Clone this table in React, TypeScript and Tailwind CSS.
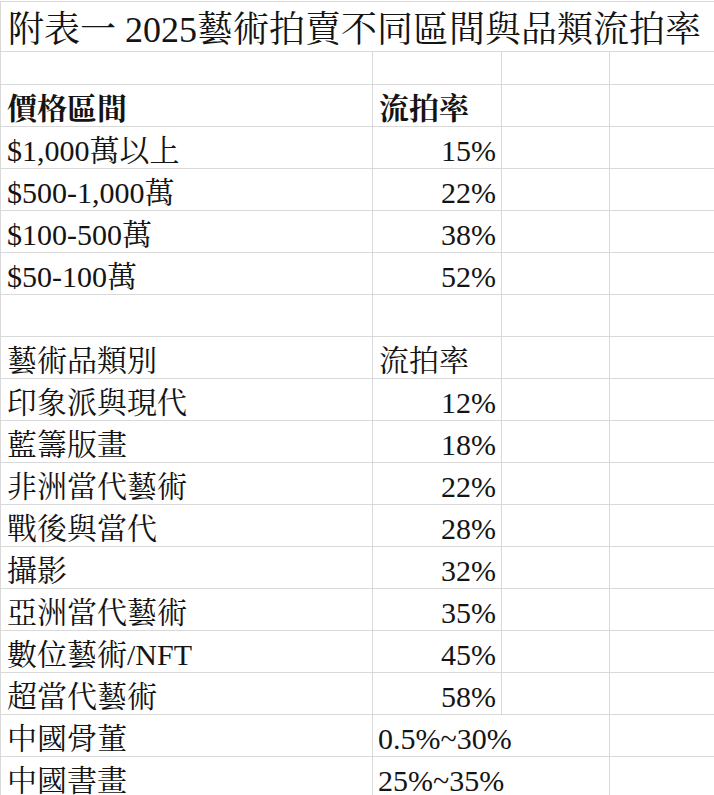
import React from "react";

const font = {
  fontFamily:
    '"Liberation Serif", "Noto Serif CJK TC", "Noto Sans CJK TC", serif',
};

type Row =
  | { kind: "empty"; h?: string }
  | { kind: "pair"; a: string; b: string; bold?: boolean; bLeft?: boolean }
  | { kind: "span"; a: string; b: string };

const rows: Row[] = [
  { kind: "empty", h: "h-[33px]" },
  { kind: "pair", a: "價格區間", b: "流拍率", bold: true, bLeft: true },
  { kind: "pair", a: "$1,000萬以上", b: "15%" },
  { kind: "pair", a: "$500-1,000萬", b: "22%" },
  { kind: "pair", a: "$100-500萬", b: "38%" },
  { kind: "pair", a: "$50-100萬", b: "52%" },
  { kind: "empty" },
  { kind: "pair", a: "藝術品類別", b: "流拍率", bLeft: true },
  { kind: "pair", a: "印象派與現代", b: "12%" },
  { kind: "pair", a: "藍籌版畫", b: "18%" },
  { kind: "pair", a: "非洲當代藝術", b: "22%" },
  { kind: "pair", a: "戰後與當代", b: "28%" },
  { kind: "pair", a: "攝影", b: "32%" },
  { kind: "pair", a: "亞洲當代藝術", b: "35%" },
  { kind: "pair", a: "數位藝術/NFT", b: "45%" },
  { kind: "pair", a: "超當代藝術", b: "58%" },
  { kind: "span", a: "中國骨董", b: "0.5%~30%" },
  { kind: "span", a: "中國書畫", b: "25%~35%" },
];

const cell =
  "border-r border-b border-[#d9d9d9] flex items-end overflow-visible whitespace-nowrap";

export default function App() {
  return (
    <div
      className="w-[714px] h-[795px] overflow-hidden bg-white text-[#141414]"
      style={font}
    >
      <div className="border-t border-l border-[#d9d9d9] mt-px">
        <div className="h-[50px] border-b border-[#d9d9d9] flex items-end pl-[7px] pb-[3px] text-[36px] leading-none whitespace-nowrap">
          附表一 2025藝術拍賣不同區間與品類流拍率
        </div>
        {rows.map((r, i) => {
          const h = r.kind === "empty" && r.h ? r.h : "h-[42px]";
          return (
            <div
              key={i}
              className={`grid grid-cols-[372px_129px_108px_105px] ${h} text-[30px] leading-none`}
            >
              {r.kind === "empty" && (
                <>
                  <div className={cell} />
                  <div className={cell} />
                  <div className={cell} />
                  <div className="border-b border-[#d9d9d9]" />
                </>
              )}
              {r.kind === "pair" && (
                <>
                  <div
                    className={`${cell} pl-[6px] pb-[2px] ${r.bold ? "font-bold" : ""}`}
                  >
                    {r.a}
                  </div>
                  <div
                    className={`${cell} pb-[2px] ${
                      r.bLeft ? "pl-[6px] justify-start" : "pr-[5px] justify-end"
                    } ${r.bold ? "font-bold" : ""}`}
                  >
                    {r.b}
                  </div>
                  <div className={cell} />
                  <div className="border-b border-[#d9d9d9]" />
                </>
              )}
              {r.kind === "span" && (
                <>
                  <div className={`${cell} pl-[6px] pb-[2px]`}>{r.a}</div>
                  <div className={`${cell} col-span-2 pl-[5px] pb-[2px]`}>
                    {r.b}
                  </div>
                  <div className="border-b border-[#d9d9d9]" />
                </>
              )}
            </div>
          );
        })}
      </div>
    </div>
  );
}
